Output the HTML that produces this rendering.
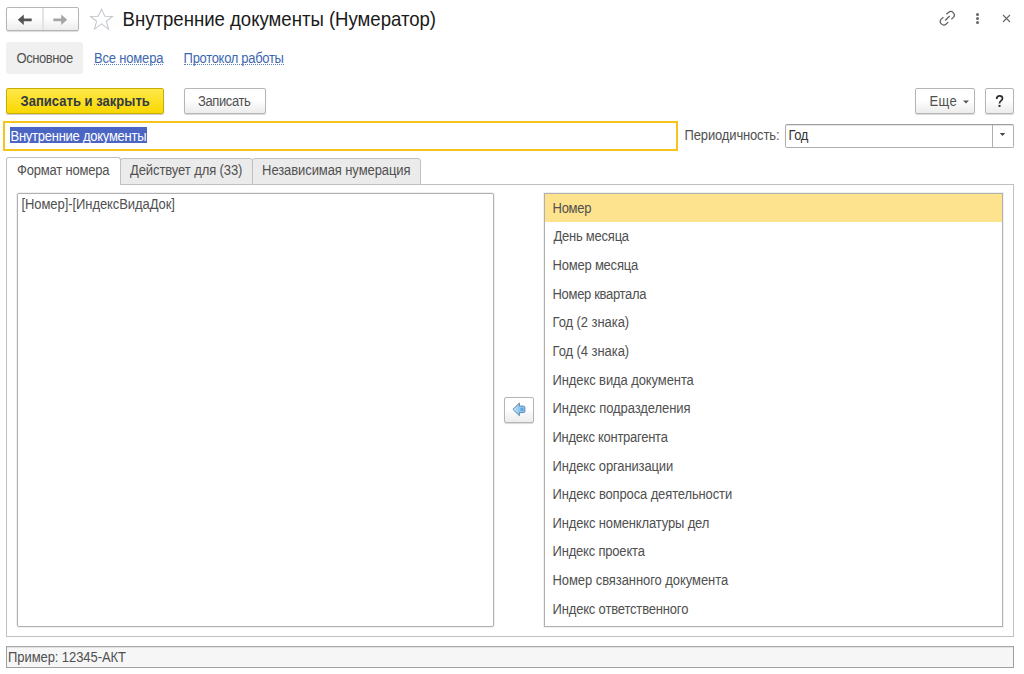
<!DOCTYPE html>
<html><head><meta charset="utf-8">
<style>
*{box-sizing:border-box;margin:0;padding:0}
html,body{width:1024px;height:674px;overflow:hidden;background:#fff}
body{position:relative;font-family:"Liberation Sans",sans-serif;font-size:13px;color:#4d4d4d}
.a{position:absolute}
.t{position:absolute;white-space:nowrap;line-height:16px;font-size:13px}
.btn{position:absolute;border:1px solid #b5b5b5;border-radius:2px;background:linear-gradient(#fff 0%,#fff 45%,#ececec 100%);box-shadow:0 1px 1px rgba(0,0,0,.15)}
.link{color:#3d67b1}.link::after{content:"";position:absolute;left:0;right:0;top:12.8px;height:0;border-bottom:1px dotted #5a7fc0}
.row{position:absolute;left:1px;right:1px;height:28.64px}
</style></head><body>

<!-- nav buttons -->
<div class="btn" style="left:6px;top:7px;width:73px;height:23.8px"></div>
<div class="a" style="left:42px;top:8px;width:2px;height:21.8px;background:#e4e4e4"></div>
<svg class="a" style="left:17px;top:13.5px" width="16" height="12" viewBox="0 0 16 12">
 <path d="M0.8 5.8 L6.8 0.5 L6.8 4.5 L14.7 4.5 L14.7 7.2 L6.8 7.2 L6.8 11 Z" fill="#545454"/>
</svg>
<svg class="a" style="left:52px;top:13.5px" width="16" height="12" viewBox="0 0 16 12">
 <path d="M15.2 5.8 L9.2 0.5 L9.2 4.5 L1.3 4.5 L1.3 7.2 L9.2 7.2 L9.2 11 Z" fill="#a6a6a6"/>
</svg>
<!-- star -->
<svg class="a" style="left:89px;top:8px" width="25" height="23" viewBox="0 0 25 23">
 <path d="M12.5 1.2 L15.8 8.3 L23.5 8.5 L17.4 13.3 L19.5 21.2 L12.5 15.9 L5.5 21.2 L7.6 13.3 L1.5 8.5 L9.2 8.3 Z" fill="none" stroke="#c5cad0" stroke-width="1.1" stroke-linejoin="miter"/>
</svg>

<!-- header icons -->
<svg class="a" style="left:936px;top:8px" width="24" height="20" viewBox="0 0 24 20">
 <g fill="none" stroke="#5e5e5e" stroke-width="1.25" stroke-linecap="butt">
  <path d="M10.4 6.3 L12.43 4.43 A3.5 3.5 0 0 1 17.37 9.37 L15.4 11.3"/>
  <path d="M7.4 9.2 L5.23 11.13 A3.5 3.5 0 0 0 10.17 16.07 L12.2 14.1"/>
  <path d="M9.2 12.5 L13.6 8"/>
 </g>
</svg>
<div class="a" style="left:975.5px;top:12.7px;width:3px;height:3px;border-radius:50%;background:#666"></div>
<div class="a" style="left:975.5px;top:16.7px;width:3px;height:3px;border-radius:50%;background:#666"></div>
<div class="a" style="left:975.5px;top:20.6px;width:3px;height:3px;border-radius:50%;background:#666"></div>
<svg class="a" style="left:1002px;top:14px" width="9" height="9" viewBox="0 0 9 9">
 <path d="M1 1 L8 8 M8 1 L1 8" stroke="#666" stroke-width="1.1"/>
</svg>

<!-- section tabs -->
<div class="a" style="left:6px;top:42px;width:77px;height:32px;border-radius:3px;background:#f0f0f0"></div>

<!-- command bar -->
<div class="a" style="left:6px;top:88px;width:158px;height:26px;border:1px solid #c9ad00;border-radius:2px;background:linear-gradient(#ffe84a,#f9d800);box-shadow:0 1px 1px rgba(0,0,0,.2)"></div>
<div class="btn" style="left:184px;top:88px;width:82px;height:26px"></div>
<div class="btn" style="left:915px;top:88px;width:60px;height:26px"></div>
<svg class="a" style="left:962px;top:100px" width="8" height="4" viewBox="0 0 8 4"><path d="M1 0.5 L7 0.5 L4 3.5Z" fill="#555"/></svg>
<div class="btn" style="left:985px;top:88px;width:29px;height:26px"></div>
<svg class="a" style="left:984px;top:86px" width="32" height="30" viewBox="0 0 32 30">
 <path d="M12.7 12.9 C12.7 10.9 14 9.9 15.7 9.9 C17.5 9.9 18.5 11.1 18.5 12.5 C18.5 14.6 15.5 14.9 15.5 17.4" fill="none" stroke="#2e2e2e" stroke-width="1.7"/>
 <rect x="14.5" y="18.9" width="2" height="2" fill="#2e2e2e"/>
</svg>

<!-- name input -->
<div class="a" style="left:3px;top:121px;width:675px;height:30px;border:2px solid #f6c51b"></div>
<div class="a" style="left:10px;top:127px;width:137px;height:16px;background:#4b65c4"></div>

<div class="a" style="left:785px;top:123.5px;width:229px;height:24.5px;border:1px solid #b0b0b0;border-top-color:#a0a0a0;border-radius:2px;box-shadow:inset 0 1px 0 #e4e4e4"></div>
<div class="a" style="left:992px;top:125px;width:1px;height:22px;background:#b0b0b0"></div>
<svg class="a" style="left:999px;top:132px" width="7" height="5" viewBox="0 0 7 5"><path d="M0.8 1 L6.2 1 L3.5 4Z" fill="#444"/></svg>

<!-- tabs -->
<div class="a" style="left:6px;top:184px;width:1008px;height:453px;border:1px solid #c0c0c0"></div>
<div class="a" style="left:6px;top:157px;width:115px;height:28px;border:1px solid #c0c0c0;border-bottom:none;border-radius:3px 3px 0 0;background:#fff"></div>
<div class="a" style="left:120px;top:158px;width:133px;height:27px;border:1px solid #c0c0c0;border-radius:3px 3px 0 0;background:#ebebeb"></div>
<div class="a" style="left:252px;top:158px;width:169px;height:27px;border:1px solid #c0c0c0;border-radius:3px 3px 0 0;background:#ebebeb"></div>

<!-- textarea -->
<div class="a" style="left:17px;top:193px;width:477px;height:434px;border:1px solid #b0b0b0;border-radius:2px;box-shadow:0 0 0 1px rgba(0,0,0,.06)"></div>

<!-- move button -->
<div class="btn" style="left:504px;top:397px;width:30px;height:26px"></div>
<svg class="a" style="left:508px;top:400px" width="22" height="20" viewBox="0 0 22 20">
 <defs><linearGradient id="ag" x1="4" y1="0" x2="17" y2="0" gradientUnits="userSpaceOnUse"><stop offset="0" stop-color="#d8eefb"/><stop offset="0.5" stop-color="#93c9ef"/><stop offset="1" stop-color="#5aa2dc"/></linearGradient></defs>
 <path d="M4.9 9.35 L11.4 3 L11.4 6.1 L15.3 6.1 Q16.9 6.1 16.9 7.7 L16.9 11 Q16.9 12.6 15.3 12.6 L11.4 12.6 L11.4 15.7 Z" fill="url(#ag)" stroke="#5a86ab" stroke-width="0.95" stroke-linejoin="round"/>
 <rect x="12" y="7.2" width="3.9" height="4.3" fill="#5ca5df" stroke="#a6d3f2" stroke-width="0.7"/>
</svg>

<!-- list -->
<div class="a" style="left:543.5px;top:193px;width:459.5px;height:434px;border:1px solid #b0b0b0;box-shadow:0 0 0 1px rgba(0,0,0,.06);overflow:hidden">
 <div class="a" style="left:0;top:0;width:458px;height:28px;background:#fde38d"></div>
</div>

<!-- footer -->
<div class="a" style="left:6px;top:646px;width:1008px;height:22px;border:1px solid #a0a0a0;border-top-color:#a8a8a8;background:#f6f6f6;box-shadow:inset 0 1px 0 #e2e2e2"></div>



<div class="t" style="left:122.60px;top:8.65px;font-size:18.6px;line-height:22px;color:#1a1a1a;letter-spacing:-0.017px;transform:scaleY(1.08);transform-origin:0 17.45px;">Внутренние документы (Нумератор)</div>
<div class="t" style="left:16.48px;top:50.79px;font-size:13.0px;line-height:16px;color:#505050;letter-spacing:-0.411px;transform:scaleY(1.08);transform-origin:0 12.51px;">Основное</div>
<div class="t link" style="left:94.02px;top:50.59px;font-size:13.0px;line-height:16px;color:#3d67b1;letter-spacing:-0.180px;transform:scaleY(1.08);transform-origin:0 12.51px;">Все номера</div>
<div class="t link" style="left:183.62px;top:50.59px;font-size:13.0px;line-height:16px;color:#3d67b1;letter-spacing:-0.309px;transform:scaleY(1.08);transform-origin:0 12.51px;">Протокол работы</div>
<div class="t" style="left:20.48px;top:93.59px;font-size:13.0px;line-height:16px;color:#333a44;letter-spacing:0.032px;transform:scaleY(1.08);transform-origin:0 12.51px;font-weight:bold;">Записать и закрыть</div>
<div class="t" style="left:198.00px;top:93.59px;font-size:13.0px;line-height:16px;color:#505050;letter-spacing:-0.386px;transform:scaleY(1.08);transform-origin:0 12.51px;">Записать</div>
<div class="t" style="left:929.50px;top:93.59px;font-size:13.0px;line-height:16px;color:#505050;letter-spacing:0.360px;transform:scaleY(1.08);transform-origin:0 12.51px;">Еще</div>
<div class="t" style="left:10.54px;top:128.89px;font-size:13.0px;line-height:16px;color:#fff;letter-spacing:-0.256px;transform:scaleY(1.08);transform-origin:0 12.51px;">Внутренние документы</div>
<div class="t" style="left:684.60px;top:128.19px;font-size:13.0px;line-height:16px;color:#505050;letter-spacing:-0.152px;transform:scaleY(1.08);transform-origin:0 12.51px;">Периодичность:</div>
<div class="t" style="left:788.54px;top:127.99px;font-size:13.0px;line-height:16px;color:#333;letter-spacing:-0.450px;transform:scaleY(1.08);transform-origin:0 12.51px;">Год</div>
<div class="t" style="left:17.08px;top:162.59px;font-size:13.0px;line-height:16px;color:#505050;letter-spacing:-0.195px;transform:scaleY(1.08);transform-origin:0 12.51px;">Формат номера</div>
<div class="t" style="left:130.02px;top:162.59px;font-size:13.0px;line-height:16px;color:#505050;letter-spacing:-0.095px;transform:scaleY(1.08);transform-origin:0 12.51px;">Действует для (33)</div>
<div class="t" style="left:262.10px;top:162.59px;font-size:13.0px;line-height:16px;color:#505050;letter-spacing:-0.090px;transform:scaleY(1.08);transform-origin:0 12.51px;">Независимая нумерация</div>
<div class="t" style="left:21.50px;top:197.49px;font-size:13.0px;line-height:16px;color:#505050;letter-spacing:-0.074px;transform:scaleY(1.08);transform-origin:0 12.51px;">[Номер]-[ИндексВидаДок]</div>
<div class="t" style="left:552.54px;top:200.74px;font-size:13.0px;line-height:16px;color:#505050;letter-spacing:-0.270px;transform:scaleY(1.08);transform-origin:0 12.51px;">Номер</div>
<div class="t" style="left:553.44px;top:229.38px;font-size:13.0px;line-height:16px;color:#505050;letter-spacing:-0.234px;transform:scaleY(1.08);transform-origin:0 12.51px;">День месяца</div>
<div class="t" style="left:552.54px;top:258.02px;font-size:13.0px;line-height:16px;color:#505050;letter-spacing:-0.213px;transform:scaleY(1.08);transform-origin:0 12.51px;">Номер месяца</div>
<div class="t" style="left:552.54px;top:286.66px;font-size:13.0px;line-height:16px;color:#505050;letter-spacing:-0.318px;transform:scaleY(1.08);transform-origin:0 12.51px;">Номер квартала</div>
<div class="t" style="left:552.54px;top:315.30px;font-size:13.0px;line-height:16px;color:#505050;letter-spacing:-0.060px;transform:scaleY(1.08);transform-origin:0 12.51px;">Год (2 знака)</div>
<div class="t" style="left:552.54px;top:343.94px;font-size:13.0px;line-height:16px;color:#505050;letter-spacing:-0.060px;transform:scaleY(1.08);transform-origin:0 12.51px;">Год (4 знака)</div>
<div class="t" style="left:552.54px;top:372.58px;font-size:13.0px;line-height:16px;color:#505050;letter-spacing:-0.099px;transform:scaleY(1.08);transform-origin:0 12.51px;">Индекс вида документа</div>
<div class="t" style="left:552.54px;top:401.22px;font-size:13.0px;line-height:16px;color:#505050;letter-spacing:-0.085px;transform:scaleY(1.08);transform-origin:0 12.51px;">Индекс подразделения</div>
<div class="t" style="left:552.54px;top:429.86px;font-size:13.0px;line-height:16px;color:#505050;letter-spacing:-0.265px;transform:scaleY(1.08);transform-origin:0 12.51px;">Индекс контрагента</div>
<div class="t" style="left:552.54px;top:458.50px;font-size:13.0px;line-height:16px;color:#505050;letter-spacing:-0.138px;transform:scaleY(1.08);transform-origin:0 12.51px;">Индекс организации</div>
<div class="t" style="left:552.54px;top:487.14px;font-size:13.0px;line-height:16px;color:#505050;letter-spacing:-0.132px;transform:scaleY(1.08);transform-origin:0 12.51px;">Индекс вопроса деятельности</div>
<div class="t" style="left:552.54px;top:515.78px;font-size:13.0px;line-height:16px;color:#505050;letter-spacing:-0.147px;transform:scaleY(1.08);transform-origin:0 12.51px;">Индекс номенклатуры дел</div>
<div class="t" style="left:552.54px;top:544.42px;font-size:13.0px;line-height:16px;color:#505050;letter-spacing:-0.194px;transform:scaleY(1.08);transform-origin:0 12.51px;">Индекс проекта</div>
<div class="t" style="left:552.54px;top:573.06px;font-size:13.0px;line-height:16px;color:#505050;letter-spacing:-0.072px;transform:scaleY(1.08);transform-origin:0 12.51px;">Номер связанного документа</div>
<div class="t" style="left:552.54px;top:601.70px;font-size:13.0px;line-height:16px;color:#505050;letter-spacing:-0.171px;transform:scaleY(1.08);transform-origin:0 12.51px;">Индекс ответственного</div>
<div class="t" style="left:8.06px;top:649.89px;font-size:13.0px;line-height:16px;color:#505050;letter-spacing:-0.079px;transform:scaleY(1.08);transform-origin:0 12.51px;">Пример: 12345-АКТ</div>
</body></html>
